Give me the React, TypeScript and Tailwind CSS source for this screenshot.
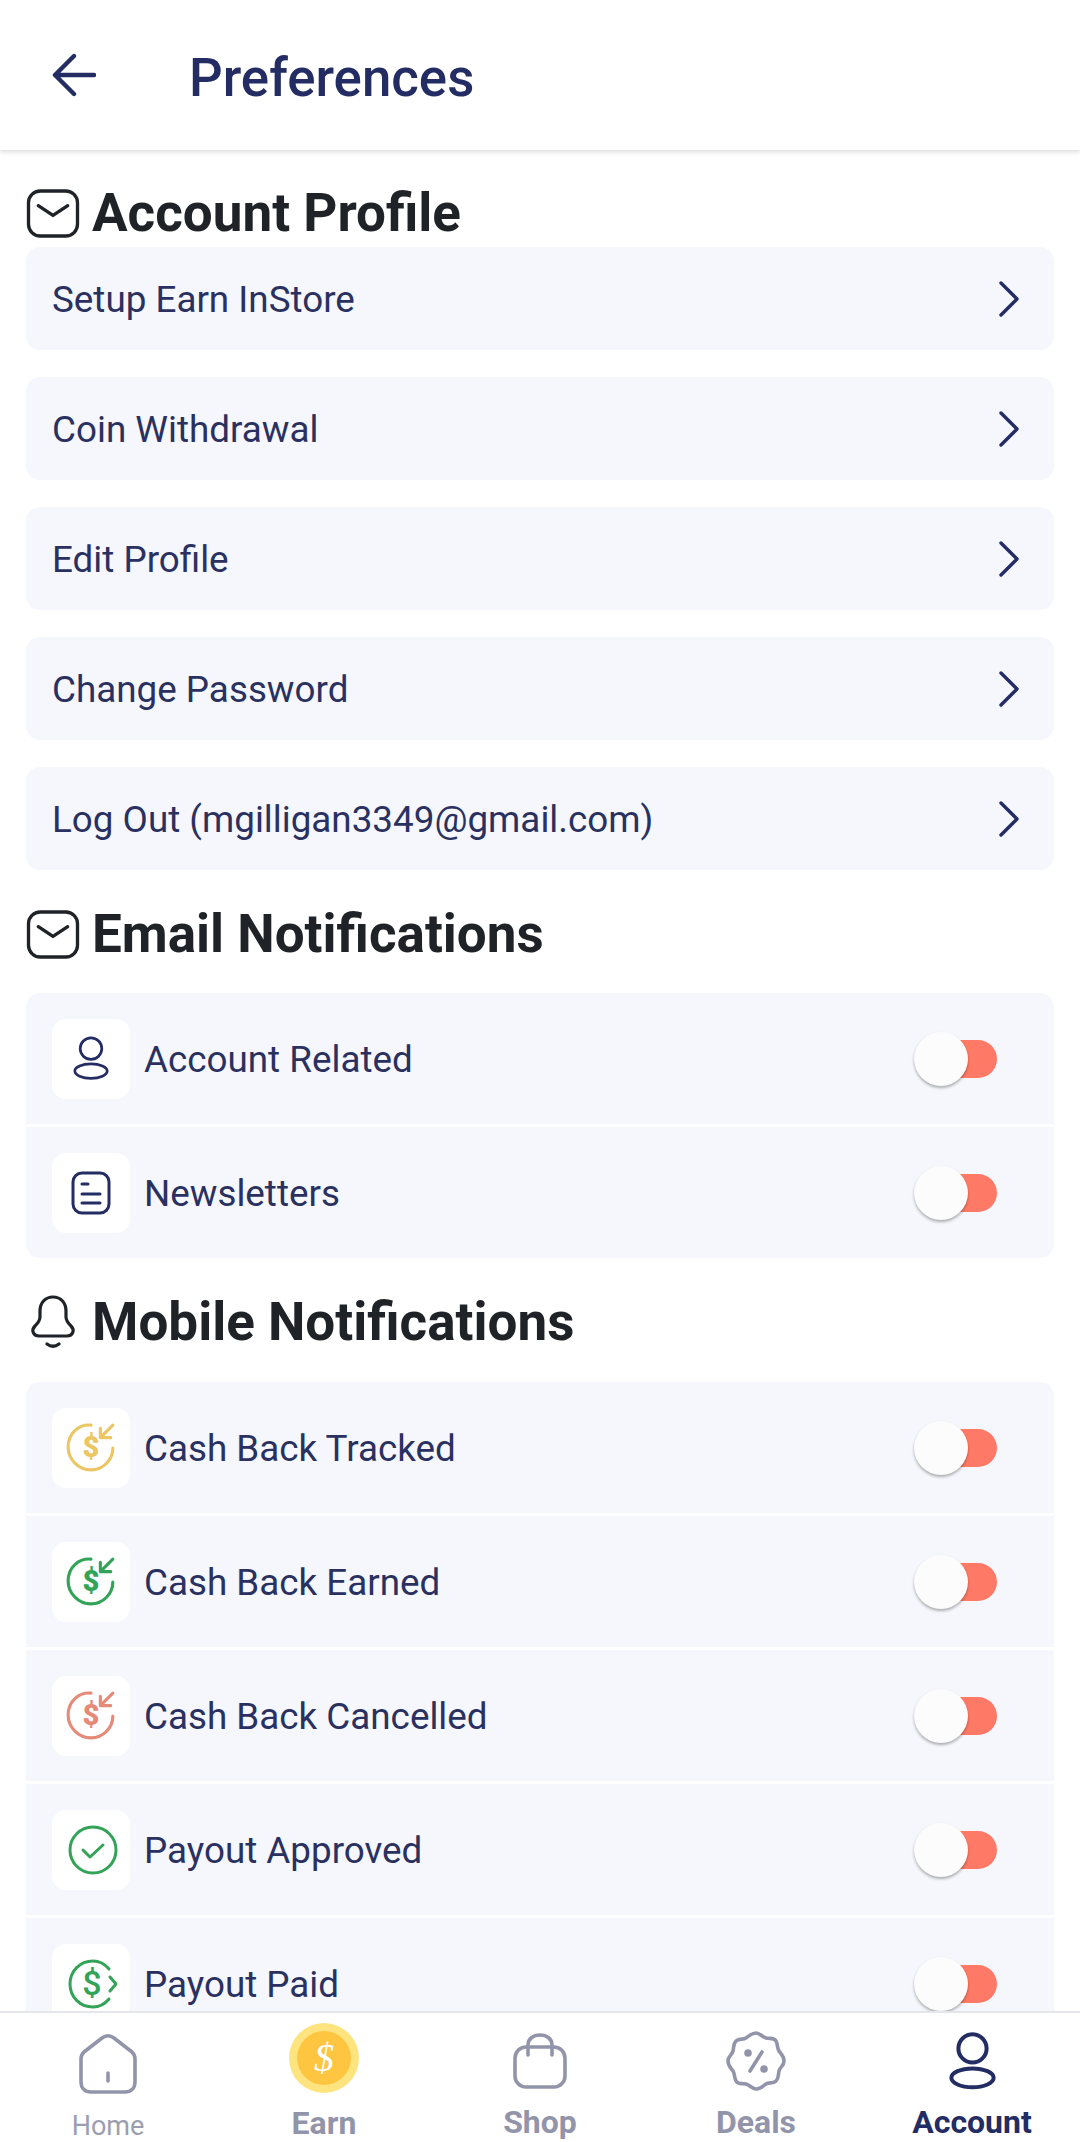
import type { ReactNode } from 'react';

const NAVY = '#232c63';

const MailIcon = () => (
  <svg width="54" height="49" viewBox="0 0 54 50" fill="none" stroke="#1f2226" strokeWidth="3.4" strokeLinecap="round" strokeLinejoin="round">
    <rect x="2" y="2" width="50" height="46" rx="12" />
    <path d="M12 17l15 10 15-10" />
  </svg>
);

const BellIcon = () => (
  <svg width="46" height="54" viewBox="0 0 46 54" fill="none" stroke="#1f2226" strokeWidth="3.2" strokeLinecap="round" strokeLinejoin="round">
    <path d="M23 2c-8 0-13 6-13 14v6c0 4-2 6-5 9-4 4-2 10 4 10h28c6 0 8-6 4-10-3-3-5-5-5-9v-6c0-8-5-14-13-14z" />
    <path d="M17 49c4 3 8 3 12 0" />
  </svg>
);

const Chevron = () => (
  <svg width="22" height="38" viewBox="0 0 22 38" fill="none" stroke={NAVY} strokeWidth="3.4" strokeLinecap="round" strokeLinejoin="round">
    <path d="M3 3l16 16L3 35" />
  </svg>
);

const UserIcon = ({ color = NAVY, size = 36, stroke = 3 }: { color?: string; size?: number; stroke?: number }) => (
  <svg width={size} height={size * 1.25} viewBox="0 0 40 50" fill="none" stroke={color} strokeWidth={stroke}>
    <circle cx="20" cy="14" r="12" />
    <ellipse cx="20" cy="39" rx="18" ry="8" />
  </svg>
);

const NewsIcon = () => (
  <svg width="40" height="44" viewBox="0 0 40 44" fill="none" stroke={NAVY} strokeWidth="3" strokeLinecap="round">
    <rect x="2" y="2" width="36" height="40" rx="9" />
    <path d="M11 13h6M11 23h18M11 32h18" />
  </svg>
);

const CashBackIcon = ({ color }: { color: string }) => (
  <svg width="52" height="52" viewBox="0 0 50 50" fill="none" stroke={color} strokeWidth="3" strokeLinecap="round" strokeLinejoin="round">
    <path d="M25 3C13 2 3 11 3 24c0 12 10 22 22 22s21-10 21-21" />
    <path d="M46 3L34 15M34 6v9h10" />
    <text x="25" y="34" textAnchor="middle" fontSize="28" fontWeight="900" fontFamily="Roboto, sans-serif" fill={color} stroke="none">$</text>
  </svg>
);

const ApprovedIcon = () => (
  <svg className="ml-[3px]" width="50" height="50" viewBox="0 0 50 50" fill="none" stroke="#33a457" strokeWidth="3" strokeLinecap="round" strokeLinejoin="round">
    <circle cx="25" cy="25" r="23" />
    <path d="M15 25l7 7 13-12" />
  </svg>
);

const PaidIcon = () => (
  <svg className="ml-[3px]" width="50" height="50" viewBox="0 0 50 50" fill="none" stroke="#33a457" strokeWidth="3" strokeLinecap="round" strokeLinejoin="round">
    <path d="M41 10C36 4 31 2 25 2 12 2 2 12 2 25s10 23 23 23c6 0 11-2 16-8" />
    <path d="M42 18l6 7-6 7" />
    <text x="24" y="36" textAnchor="middle" fontSize="34" fontWeight="500" fontFamily="Roboto, sans-serif" fill="#33a457" stroke="none">$</text>
  </svg>
);

const HomeIcon = () => (
  <svg width="60" height="62" viewBox="0 0 60 62" fill="none" stroke="#9295a9" strokeWidth="3.6" strokeLinecap="round" strokeLinejoin="round">
    <path d="M3 26c0-3 1-5 3-7L24 5c4-3 8-3 12 0l18 14c2 2 3 4 3 7v23c0 6-4 10-10 10H13C7 59 3 55 3 49z" />
    <path d="M30 40v8" />
  </svg>
);

const CoinIcon = () => (
  <div className="w-[70px] h-[70px] rounded-full bg-[#fde47f] flex items-center justify-center">
    <div className="w-[54px] h-[54px] rounded-full bg-[#fec541] flex items-center justify-center">
      <span className="text-white text-[40px] italic leading-none font-['Liberation_Serif',serif]">$</span>
    </div>
  </div>
);

const BagIcon = () => (
  <svg width="54" height="56" viewBox="0 0 54 56" fill="none" stroke="#9295a9" strokeWidth="3.6" strokeLinecap="round" strokeLinejoin="round">
    <rect x="2" y="14" width="50" height="40" rx="11" />
    <path d="M15 22V12c0-6 5-10 12-10s12 4 12 10v10" />
  </svg>
);

const DealsIcon = () => (
  <svg width="60" height="62" viewBox="0 0 60 62" fill="none" stroke="#9295a9" strokeWidth="3.6" strokeLinecap="round" strokeLinejoin="round">
    <path d="M30 3c4 0 6 4 10 5s8-1 10 3 1 7 3 10 5 5 5 10-4 6-5 10 0 7-3 10-7 1-10 3-6 5-10 5-6-4-10-5-8 1-10-3-1-7-3-10-5-5-5-10 4-6 5-10 0-7 3-10 7-1 10-3 6-5 10-5z" />
    <path d="M36 22L24 41" />
    <circle cx="22" cy="23" r="2" fill="#9295a9" />
    <circle cx="38" cy="39" r="2" fill="#9295a9" />
  </svg>
);

const Heading = ({ icon, children }: { icon: ReactNode; children: ReactNode }) => (
  <div className="flex items-center h-[60px]">
    <div className="w-[54px] flex justify-center">{icon}</div>
    <h2 className="ml-[12px] text-[53px] font-bold leading-none text-[#1f2226]">{children}</h2>
  </div>
);

const Toggle = () => (
  <div className="relative w-[83px] h-[38px] mr-[57px]">
    <div className="absolute right-0 top-0 w-[60px] h-[38px] rounded-full bg-[#ff7a66]" />
    <div className="absolute left-0 top-[-8px] w-[54px] h-[54px] rounded-full bg-[#fcfcfc] shadow-[0_2px_3px_rgba(0,0,0,0.3)]" />
  </div>
);

const ToggleRow = ({ icon, label }: { icon: ReactNode; label: string }) => (
  <div className="h-[131px] shrink-0 bg-[#f5f7fc] flex items-center pl-[26px]">
    <div className="w-[78px] h-[80px] rounded-[14px] bg-white flex items-center justify-center">{icon}</div>
    <span className="ml-[14px] flex-1 pt-[2px] text-[36.8px] text-[#2a3160]">{label}</span>
    <Toggle />
  </div>
);

const links = ['Setup Earn InStore', 'Coin Withdrawal', 'Edit Profile', 'Change Password', 'Log Out (mgilligan3349@gmail.com)'];

export default function App() {
  return (
    <div className="w-[1080px] h-[2142px] bg-white flex flex-col overflow-hidden font-['Roboto',sans-serif]">
      <header className="h-[150px] shrink-0 flex items-center bg-white shadow-[0_2px_5px_rgba(0,0,0,0.14)] z-10">
        <svg className="ml-[52px]" width="44" height="44" viewBox="0 0 44 44" fill="none" stroke={NAVY} strokeWidth="4.4" strokeLinecap="round" strokeLinejoin="round">
          <path d="M42 22H3M22 3L3 22l19 19" />
        </svg>
        <h1 className="ml-[93px] pt-[8px] text-[52.8px] font-medium text-[#232c63]">Preferences</h1>
      </header>

      <main className="flex-1 overflow-hidden px-[26px]">
        <div className="pt-[33px]">
          <Heading icon={<MailIcon />}>Account Profile</Heading>
        </div>
        <div className="mt-[4px] flex flex-col gap-[27px]">
          {links.map((label) => (
            <div key={label} className="h-[103px] rounded-[14px] bg-[#f5f7fc] flex items-center justify-between pl-[26px] pr-[34px]">
              <span className="pt-[2px] text-[36.8px] text-[#2a3160]">{label}</span>
              <Chevron />
            </div>
          ))}
        </div>

        <div className="mt-[34px]">
          <Heading icon={<MailIcon />}>Email Notifications</Heading>
        </div>
        <div className="mt-[29px] flex flex-col gap-[3px] rounded-[14px] overflow-hidden">
          <ToggleRow icon={<UserIcon />} label="Account Related" />
          <ToggleRow icon={<NewsIcon />} label="Newsletters" />
        </div>

        <div className="mt-[34px]">
          <Heading icon={<BellIcon />}>Mobile Notifications</Heading>
        </div>
        <div className="mt-[30px] flex flex-col gap-[3px] rounded-t-[14px] overflow-hidden">
          <ToggleRow icon={<CashBackIcon color="#ecc663" />} label="Cash Back Tracked" />
          <ToggleRow icon={<CashBackIcon color="#33a457" />} label="Cash Back Earned" />
          <ToggleRow icon={<CashBackIcon color="#e58a78" />} label="Cash Back Cancelled" />
          <ToggleRow icon={<ApprovedIcon />} label="Payout Approved" />
          <ToggleRow icon={<PaidIcon />} label="Payout Paid" />
        </div>
      </main>

      <nav className="h-[131px] shrink-0 grid grid-cols-5 bg-white border-t-2 border-[#e5e6ea] z-10">
        <div className="flex flex-col items-center pt-[16px]">
          <div className="h-[70px] flex items-center"><HomeIcon /></div>
          <span className="mt-[14px] text-[27px] leading-none text-[#9c9eb0]">Home</span>
        </div>
        <div className="flex flex-col items-center pt-[8px]">
          <div className="h-[74px] flex items-center"><CoinIcon /></div>
          <span className="mt-[12px] text-[32px] leading-none font-bold text-[#9295a9]">Earn</span>
        </div>
        <div className="flex flex-col items-center pt-[16px]">
          <div className="h-[64px] flex items-center"><BagIcon /></div>
          <span className="mt-[13px] text-[32px] leading-none font-bold text-[#9295a9]">Shop</span>
        </div>
        <div className="flex flex-col items-center pt-[16px]">
          <div className="h-[64px] flex items-center"><DealsIcon /></div>
          <span className="mt-[13px] text-[32px] leading-none font-bold text-[#9295a9]">Deals</span>
        </div>
        <div className="flex flex-col items-center pt-[16px]">
          <div className="h-[64px] flex items-center"><UserIcon color={NAVY} size={47} stroke={3.4} /></div>
          <span className="mt-[13px] text-[32px] leading-none font-bold text-[#232c63]">Account</span>
        </div>
      </nav>
    </div>
  );
}
